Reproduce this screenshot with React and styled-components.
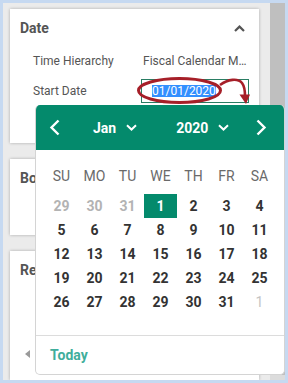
import React from "react";
import styled, { createGlobalStyle } from "styled-components";

const GlobalStyle = createGlobalStyle`
    body {
        margin: 0;
        font-family: Roboto, "Liberation Sans", Arial, sans-serif;
    }
`;

const WEEKDAYS = ["SU", "MO", "TU", "WE", "TH", "FR", "SA"];

// 5 rows of the January 2020 grid, with the spill-over days from Dec / Feb
const DAYS = [
    [29, "out"], [30, "out"], [31, "out"], [1, "selected"], [2], [3], [4],
    [5], [6], [7], [8], [9], [10], [11],
    [12], [13], [14], [15], [16], [17], [18],
    [19], [20], [21], [22], [23], [24], [25],
    [26], [27], [28], [29], [30], [31], [1, "out-light"],
];

function Caret() {
    return (
        <svg width="11" height="7" viewBox="0 0 11 7">
            <path d="M1 1.2 5.5 5.5 10 1.2" fill="none" stroke="#fff" strokeWidth="2" />
        </svg>
    );
}

export default function App() {
    return (
        <>
            <GlobalStyle />
            <Page>
                <Sidebar>
                    <Card $height={134}>
                        <CardHeader>
                            <CardTitle>Date</CardTitle>
                            <svg width="11" height="7" viewBox="0 0 11 7" style={{ marginRight: 4 }}>
                                <path d="M1 6 5.5 1.6 10 6" fill="none" stroke="#555" strokeWidth="2.2" />
                            </svg>
                        </CardHeader>
                        <FieldList>
                            <FieldRow>
                                <FieldLabel>Time Hierarchy</FieldLabel>
                                <FieldValue>Fiscal Calendar Month</FieldValue>
                            </FieldRow>
                            <FieldRow>
                                <FieldLabel>Start Date</FieldLabel>
                                <DateInput>
                                    <Selected>01/01/2020</Selected>
                                </DateInput>
                            </FieldRow>
                        </FieldList>
                    </Card>
                    <Card $height={76}>
                        <CardHeader>
                            <CardTitle>Bounds</CardTitle>
                        </CardHeader>
                    </Card>
                    <Card $grow>
                        <CardHeader>
                            <CardTitle>Relative</CardTitle>
                        </CardHeader>
                        <ScrollArrow />
                    </Card>
                </Sidebar>
                <Scrollbar>
                    <ScrollTrack />
                    <ScrollCorner />
                </Scrollbar>

                {/* annotation drawn over the start date field */}
                <Annotation width="130" height="40" viewBox="130 72 130 40">
                    <ellipse cx="179.5" cy="90.5" rx="41" ry="12" fill="none" stroke="#a61f28" strokeWidth="3" />
                    <path d="M220 85 C228 79 238 78 242 83 C245 87 245 91 245 96" fill="none" stroke="#a61f28" strokeWidth="2.6" />
                    <polygon points="239.5,94.5 250,94.5 246,104" fill="#a61f28" />
                </Annotation>

                <Popup>
                    <PopupHeader>
                        <NavButton>
                            <svg width="11" height="17" viewBox="0 0 11 17">
                                <path d="M9.5 1.5 2.5 8.5 9.5 15.5" fill="none" stroke="#fff" strokeWidth="2.4" />
                            </svg>
                        </NavButton>
                        <Picker $offset={33}>
                            Jan <Caret />
                        </Picker>
                        <Picker $offset={39}>
                            2020 <Caret />
                        </Picker>
                        <NavButton $offset={27}>
                            <svg width="11" height="17" viewBox="0 0 11 17">
                                <path d="M1.5 1.5 8.5 8.5 1.5 15.5" fill="none" stroke="#fff" strokeWidth="2.4" />
                            </svg>
                        </NavButton>
                    </PopupHeader>
                    <CalendarBody>
                        <WeekRow>
                            {WEEKDAYS.map((d) => (
                                <WeekDay key={d}>{d}</WeekDay>
                            ))}
                        </WeekRow>
                        <DayGrid>
                            {DAYS.map(([n, kind], i) => (
                                <Day key={i} $kind={kind}>
                                    {n}
                                </Day>
                            ))}
                        </DayGrid>
                    </CalendarBody>
                    <PopupFooter>
                        <TodayLink>Today</TodayLink>
                    </PopupFooter>
                </Popup>
            </Page>
        </>
    );
}

const Page = styled.div`
    position: relative;
    width: 288px;
    height: 383px;
    box-sizing: border-box;
    border: 3px solid #c6d9f1;
    background: #ebebeb;
    display: flex;
    overflow: hidden;
`;

const Sidebar = styled.div`
    width: 267px;
    padding: 6px 0 0 7px;
    box-sizing: border-box;
    display: flex;
    flex-direction: column;
    gap: 16px;
`;

const Card = styled.div`
    width: 249px;
    height: ${(p) => (p.$height ? `${p.$height}px` : "auto")};
    flex: ${(p) => (p.$grow ? 1 : "none")};
    box-sizing: border-box;
    padding: 10px 10px;
    background: #fff;
    box-shadow: 0 0 3px rgba(0, 0, 0, 0.28);
    position: relative;
`;

const CardHeader = styled.div`
    display: flex;
    align-items: center;
    justify-content: space-between;
    height: 18px;
`;

const CardTitle = styled.div`
    font-size: 14px;
    font-weight: 700;
    color: #555;
`;

const FieldList = styled.div`
    margin-top: 12px;
    display: flex;
    flex-direction: column;
    gap: 6px;
`;

const FieldRow = styled.div`
    display: grid;
    grid-template-columns: 108px 1fr;
    align-items: center;
    height: 24px;
    padding-left: 13px;
`;

const FieldLabel = styled.div`
    font-size: 12px;
    color: #555;
`;

const FieldValue = styled.div`
    font-size: 12px;
    color: #555;
    padding-left: 2px;
    white-space: nowrap;
    overflow: hidden;
    text-overflow: ellipsis;
`;

const DateInput = styled.div`
    height: 24px;
    box-sizing: border-box;
    border: 1px solid #2a7d63;
    padding-left: 10px;
    display: flex;
    align-items: center;
`;

const Selected = styled.span`
    background: #3390ff;
    color: #fff;
    font-size: 12px;
    line-height: 12px;
`;

const ScrollArrow = styled.div`
    position: absolute;
    left: 15px;
    top: 99px;
    width: 0;
    height: 0;
    border-top: 4px solid transparent;
    border-bottom: 4px solid transparent;
    border-right: 5px solid #9a9a9a;
`;

const Scrollbar = styled.div`
    width: 15px;
    display: flex;
    flex-direction: column;
`;

const ScrollTrack = styled.div`
    flex: 1;
    background: #bfbfbf;
`;

const ScrollCorner = styled.div`
    height: 5px;
    background: #dcdcdc;
`;

const Annotation = styled.svg`
    position: absolute;
    left: 127px;
    top: 69px;
    z-index: 3;
    overflow: visible;
`;

const Popup = styled.div`
    position: absolute;
    left: 32px;
    top: 102px;
    width: 250px;
    height: 270px;
    box-sizing: border-box;
    background: #fff;
    border: 1px solid #d4d4d4;
    border-top: none;
    border-radius: 5px;
    overflow: hidden;
    z-index: 2;
    display: flex;
    flex-direction: column;
`;

const PopupHeader = styled.div`
    height: 45px;
    flex: none;
    background: #048a6c;
    display: flex;
    align-items: center;
    padding-left: 14px;
    margin: 0 -1px;
`;

const NavButton = styled.div`
    display: flex;
    margin-left: ${(p) => p.$offset || 0}px;
`;

const Picker = styled.div`
    display: flex;
    align-items: center;
    gap: 10px;
    margin-left: ${(p) => p.$offset}px;
    color: #fff;
    font-size: 14px;
    font-weight: 700;
`;

const CalendarBody = styled.div`
    padding: 14px 0 21px 9px;
    border-bottom: 1px solid #dcdcdc;
`;

const WeekRow = styled.div`
    display: grid;
    grid-template-columns: repeat(7, 33px);
    height: 24px;
    margin-bottom: 6px;
`;

const WeekDay = styled.div`
    display: flex;
    align-items: center;
    justify-content: center;
    font-size: 14px;
    color: #6a6a6a;
`;

const DayGrid = styled.div`
    display: grid;
    grid-template-columns: repeat(7, 33px);
    grid-auto-rows: 24px;
`;

const Day = styled.div`
    display: flex;
    align-items: center;
    justify-content: center;
    font-size: 14px;
    font-weight: 700;
    color: ${(p) =>
        p.$kind === "selected"
            ? "#fff"
            : p.$kind === "out"
            ? "#b3b3b3"
            : p.$kind === "out-light"
            ? "#c4c4c4"
            : "#333"};
    background: ${(p) => (p.$kind === "selected" ? "#048a6c" : "transparent")};
    font-weight: ${(p) => (p.$kind === "out-light" ? 400 : 700)};
`;

const PopupFooter = styled.div`
    flex: 1;
    display: flex;
    align-items: center;
    padding-left: 14px;
`;

const TodayLink = styled.div`
    font-size: 14px;
    font-weight: 700;
    color: #3fae9c;
`;
